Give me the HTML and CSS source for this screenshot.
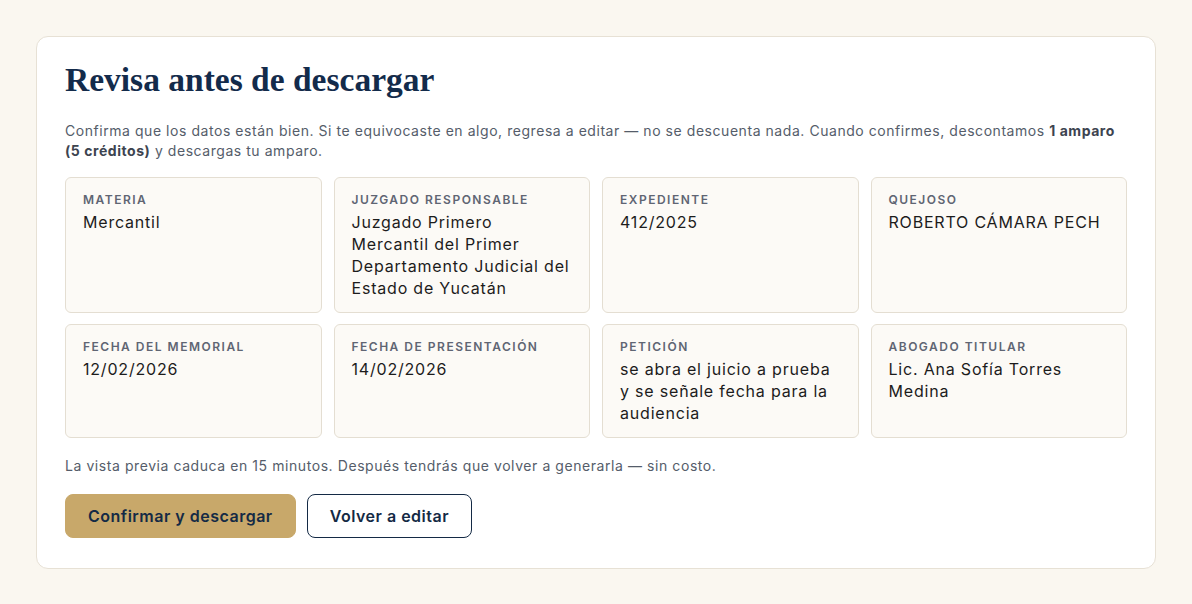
FILE: index.html
```html
<!DOCTYPE html>
<html lang="es">
<head>
  <meta charset="UTF-8" />
  <meta name="viewport" content="width=device-width, initial-scale=1.0" />
  <title>Revisa antes de descargar</title>
  <link rel="stylesheet" href="styles.css">
</head>
<body>
  <div class="review-card">
    <h1>Revisa antes de descargar</h1>
    <p class="intro">Confirma que los datos están bien. Si te equivocaste en algo, regresa a editar — no se descuenta nada. Cuando confirmes, descontamos <strong>1 amparo</strong> <strong>(5 créditos)</strong> y descargas tu amparo.</p>

    <div class="fields">
      <div class="field">
        <div class="label">Materia</div>
        <div class="value">Mercantil</div>
      </div>
      <div class="field">
        <div class="label">Juzgado responsable</div>
        <div class="value">Juzgado Primero Mercantil del Primer Departamento Judicial del Estado de Yucatán</div>
      </div>
      <div class="field">
        <div class="label">Expediente</div>
        <div class="value">412/2025</div>
      </div>
      <div class="field">
        <div class="label">Quejoso</div>
        <div class="value">ROBERTO CÁMARA PECH</div>
      </div>
      <div class="field">
        <div class="label">Fecha del memorial</div>
        <div class="value">12/02/2026</div>
      </div>
      <div class="field">
        <div class="label">Fecha de presentación</div>
        <div class="value">14/02/2026</div>
      </div>
      <div class="field">
        <div class="label">Petición</div>
        <div class="value">se abra el juicio a prueba y se señale fecha para la audiencia</div>
      </div>
      <div class="field">
        <div class="label">Abogado titular</div>
        <div class="value">Lic. Ana Sofía Torres Medina</div>
      </div>
    </div>

    <p class="note">La vista previa caduca en 15 minutos. Después tendrás que volver a generarla — sin costo.</p>

    <div class="actions">
      <button class="btn btn-primary">Confirmar y descargar</button>
      <button class="btn btn-secondary">Volver a editar</button>
    </div>
  </div>
</body>
</html>
```

FILE: styles.css
```css
body {
  margin: 0;
  padding: 36px;
  background: #faf7f0;
  font-family: 'Inter', 'Noto Sans', sans-serif;
  color: #1c1c1c;
}
.review-card {
  background: #fff;
  border: 1px solid #e7e1d5;
  border-radius: 12px;
  padding: 23px 28px 30px;
}
h1 {
  font-family: 'Liberation Serif', 'DejaVu Serif', serif;
  font-size: 33.5px;
  font-weight: bold;
  color: #132b4b;
  margin: 0 0 21px;
  line-height: 40px;
}
.intro {
  font-size: 14px;
  line-height: 20px;
  letter-spacing: 0.55px;
  color: #555d6a;
  margin: 0 0 16px;
}
.intro strong {
  color: #3d4450;
  font-weight: 700;
}
.fields {
  display: grid;
  grid-template-columns: repeat(4, 1fr);
  gap: 11px 12px;
}
.field {
  background: #fcfaf6;
  border: 1px solid #e4ded2;
  border-radius: 6px;
  padding: 15px 17px 13px;
}
.label {
  font-size: 12px;
  line-height: 14px;
  font-weight: 600;
  letter-spacing: 1.5px;
  text-transform: uppercase;
  color: #5f6573;
  margin-bottom: 4px;
}
.value {
  font-size: 16px;
  line-height: 22px;
  letter-spacing: 0.8px;
  color: #1c1c1c;
}
.note {
  font-size: 14px;
  line-height: 20px;
  letter-spacing: 0.57px;
  color: #555d6a;
  margin: 18px 0 18px;
}
.actions {
  display: flex;
  gap: 11px;
}
.btn {
  font-family: 'Inter', 'Noto Sans', sans-serif;
  font-size: 16px;
  font-weight: 600;
  letter-spacing: 0.5px;
  color: #142a45;
  height: 44px;
  padding: 0 22px;
  border-radius: 8px;
  cursor: pointer;
}
.btn-primary {
  background: #c8a86a;
  border: 1px solid #c8a86a;
}
.btn-secondary {
  background: #fff;
  border: 1px solid #142a45;
}
```
